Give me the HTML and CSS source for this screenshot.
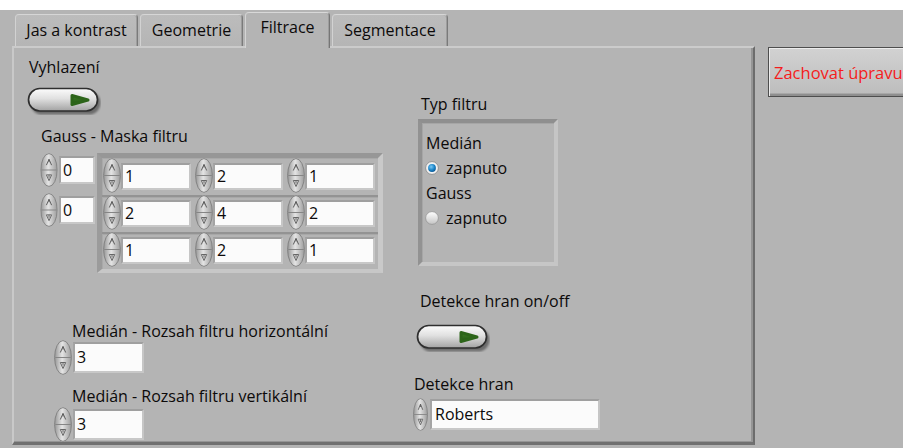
FILE: index.html
```html
<!DOCTYPE html>
<html lang="cs">
<head>
<meta charset="utf-8">
<title>Filtrace</title>
<link rel="stylesheet" href="styles.css">
</head>
<body>
<svg class="defs" width="0" height="0" aria-hidden="true">
  <defs>
    <linearGradient id="spinFill" x1="0" x2="1" y1="0" y2="0">
      <stop offset="0" stop-color="#979797"/>
      <stop offset="0.45" stop-color="#e4e4e4"/>
      <stop offset="1" stop-color="#9c9c9c"/>
    </linearGradient>
    <linearGradient id="capFill" x1="0" x2="0" y1="0" y2="1">
      <stop offset="0" stop-color="#fcfcfc"/>
      <stop offset="0.45" stop-color="#e0e0e0"/>
      <stop offset="1" stop-color="#a2a2a2"/>
    </linearGradient>
    <linearGradient id="arrowFill" x1="0" x2="0" y1="0" y2="1">
      <stop offset="0" stop-color="#3d7f26"/>
      <stop offset="1" stop-color="#245514"/>
    </linearGradient>
    <radialGradient id="dotFill" cx="0.4" cy="0.35" r="0.7">
      <stop offset="0" stop-color="#7cc8f2"/>
      <stop offset="0.6" stop-color="#1a84c8"/>
      <stop offset="1" stop-color="#0c5590"/>
    </radialGradient>
    <linearGradient id="radioFill" x1="0" x2="0" y1="0" y2="1">
      <stop offset="0" stop-color="#ffffff"/>
      <stop offset="1" stop-color="#c4c4c4"/>
    </linearGradient>
    <filter id="soft" x="-20%" y="-40%" width="140%" height="180%">
      <feGaussianBlur stdDeviation="1.3"/>
    </filter>
    <!-- increment / decrement buttons of a numeric -->
    <symbol id="spin" viewBox="0 0 18 35">
      <ellipse cx="9" cy="17.5" rx="8.4" ry="16.9" fill="url(#spinFill)" stroke="#7e7e7e" stroke-width="0.9"/>
      <path d="M1.2 17.5 H16.8" stroke="#858585" stroke-width="1"/>
      <path d="M6.3 12.5 L9 6.5 L11.7 12.5 M9 6.5 V9.5" fill="none" stroke="#5a5a5a" stroke-width="1"/>
      <path d="M6.3 22.5 H11.7 L9 28.5 Z M9 22.5 V25.5" fill="none" stroke="#666666" stroke-width="1"/>
    </symbol>
    <!-- boolean switch with green arrow -->
    <symbol id="switch" viewBox="0 0 74 28">
      <rect x="3.5" y="4.5" width="70" height="23" rx="11.5" fill="#000" opacity="0.4" filter="url(#soft)"/>
      <rect x="1.5" y="1.5" width="69" height="22.5" rx="11.25" fill="url(#capFill)" stroke="#2e2e2e" stroke-width="1.7"/>
      <path d="M45 8.5 L61 13 L45 17.5 Z" fill="url(#arrowFill)" stroke="#2c6419" stroke-width="3" stroke-linejoin="round"/>
    </symbol>
    <symbol id="radio-on" viewBox="0 0 14 14">
      <circle cx="7" cy="7" r="6.4" fill="#f2f2f2" stroke="#8c8c8c" stroke-width="0.9"/>
      <circle cx="7" cy="7" r="3.9" fill="url(#dotFill)"/>
    </symbol>
    <symbol id="radio-off" viewBox="0 0 14 14">
      <circle cx="7" cy="7" r="6.4" fill="url(#radioFill)" stroke="#9a9a9a" stroke-width="0.9"/>
    </symbol>
  </defs>
</svg>

<div class="window">
  <div class="tabctl">
    <div class="tabs">
      <div class="tab tab-jas">Jas a kontrast</div>
      <div class="tab tab-geo">Geometrie</div>
      <div class="tab tab-filt active">Filtrace</div>
      <div class="tab tab-seg">Segmentace</div>
    </div>

    <div class="panel">
      <div class="col col-left">
        <div class="lbl lbl-vyhl">Vyhlazení</div>
        <svg class="switch switch-vyhl" viewBox="0 0 74 28"><use href="#switch"/></svg>

        <div class="lbl lbl-gauss">Gauss - Maska filtru</div>
        <div class="array">
          <div class="indices">
            <div class="num idx">
              <svg class="spin" viewBox="0 0 18 35"><use href="#spin"/></svg>
              <div class="field field-idx">0</div>
            </div>
            <div class="num idx">
              <svg class="spin" viewBox="0 0 18 35"><use href="#spin"/></svg>
              <div class="field field-idx">0</div>
            </div>
          </div>
          <div class="arr-frame">
            <div class="arr-row">
              <div class="num cell"><svg class="spin" viewBox="0 0 18 35"><use href="#spin"/></svg><div class="field field-cell">1</div></div>
              <div class="num cell"><svg class="spin" viewBox="0 0 18 35"><use href="#spin"/></svg><div class="field field-cell">2</div></div>
              <div class="num cell"><svg class="spin" viewBox="0 0 18 35"><use href="#spin"/></svg><div class="field field-cell">1</div></div>
            </div>
            <div class="arr-row">
              <div class="num cell"><svg class="spin" viewBox="0 0 18 35"><use href="#spin"/></svg><div class="field field-cell">2</div></div>
              <div class="num cell"><svg class="spin" viewBox="0 0 18 35"><use href="#spin"/></svg><div class="field field-cell">4</div></div>
              <div class="num cell"><svg class="spin" viewBox="0 0 18 35"><use href="#spin"/></svg><div class="field field-cell">2</div></div>
            </div>
            <div class="arr-row">
              <div class="num cell"><svg class="spin" viewBox="0 0 18 35"><use href="#spin"/></svg><div class="field field-cell">1</div></div>
              <div class="num cell"><svg class="spin" viewBox="0 0 18 35"><use href="#spin"/></svg><div class="field field-cell">2</div></div>
              <div class="num cell"><svg class="spin" viewBox="0 0 18 35"><use href="#spin"/></svg><div class="field field-cell">1</div></div>
            </div>
          </div>
        </div>

        <div class="lbl lbl-horiz">Medián - Rozsah filtru horizontální</div>
        <div class="num range range-h">
          <svg class="spin" viewBox="0 0 18 35"><use href="#spin"/></svg>
          <div class="field field-range">3</div>
        </div>
        <div class="lbl lbl-vert">Medián - Rozsah filtru vertikální</div>
        <div class="num range range-v">
          <svg class="spin" viewBox="0 0 18 35"><use href="#spin"/></svg>
          <div class="field field-range">3</div>
        </div>
      </div>

      <div class="col col-right">
        <div class="lbl lbl-typ">Typ filtru</div>
        <div class="typ-frame">
          <div class="lbl typ-head">Medián</div>
          <div class="radio-row">
            <svg class="radio" viewBox="0 0 14 14"><use href="#radio-on"/></svg>
            <span>zapnuto</span>
          </div>
          <div class="lbl typ-head typ-head-2">Gauss</div>
          <div class="radio-row">
            <svg class="radio" viewBox="0 0 14 14"><use href="#radio-off"/></svg>
            <span>zapnuto</span>
          </div>
        </div>

        <div class="lbl lbl-onoff">Detekce hran on/off</div>
        <svg class="switch switch-edge" viewBox="0 0 74 28"><use href="#switch"/></svg>

        <div class="lbl lbl-edge">Detekce hran</div>
        <div class="num ring">
          <svg class="spin spin-ring" viewBox="0 0 18 35" preserveAspectRatio="none"><use href="#spin"/></svg>
          <div class="field field-ring">Roberts</div>
        </div>
      </div>
    </div>
  </div>

  <div class="side">
    <button class="keep" type="button">Zachovat úpravu</button>
  </div>
</div>
</body>
</html>
```

FILE: styles.css
```css
html, body {
  margin: 0;
  padding: 0;
  width: 903px;
  height: 448px;
  overflow: hidden;
  background: #ffffff;
}

body {
  font-family: "Open Sans", "Noto Sans", sans-serif;
  font-size: 16px;
  color: #0c0a0a;
}

.defs {
  display: block;
  width: 0;
  height: 0;
  overflow: hidden;
}

.window {
  display: flex;
  margin-top: 10px;
  height: 438px;
  background: #b4b4b4;
}

/* ---------- tab control ---------- */
.tabctl {
  flex: none;
  margin-left: 12px;
  width: 743px;
  display: flex;
  flex-direction: column;
}

.tabs {
  height: 36px;
  display: flex;
  align-items: flex-end;
  gap: 2px;
  padding-left: 3px;
}

.tab {
  box-sizing: border-box;
  height: 32px;
  padding: 5px 0 0;
  text-align: center;
  line-height: 20px;
  white-space: nowrap;
  background: linear-gradient(#bcbcbc, #b5b5b5);
  border: 1px solid;
  border-color: #d6d6d6 #7a7a7a transparent #d2d2d2;
  border-bottom: 0;
  border-radius: 4px 4px 0 0;
  box-shadow: inset -1px 0 0 #9d9d9d;
}

.tab-jas  { width: 123px; }
.tab-geo  { width: 103px; }
.tab-filt { width: 85px; }
.tab-seg  { width: 116px; }

.tab.active {
  position: relative;
  z-index: 1;
  height: 36px;
  margin-bottom: -2px;
  padding-top: 4px;
  background: #b4b4b4;
  border-color: #d8d8d8 #767676 transparent #d4d4d4;
}

.panel {
  box-sizing: border-box;
  height: 399px;
  display: flex;
  background: #b4b4b4;
  border-top: 2px solid #cbcbcb;
  border-left: 2px solid #c9c9c9;
  border-right: 2px solid #6c6c6c;
  border-bottom: 3px solid #707070;
  box-shadow: inset -2px -1px 0 #959595;
}

.col {
  display: flex;
  flex-direction: column;
  align-items: flex-start;
}

.col-left  { width: 384px; flex: none; }
.col-right { flex: 1; }

.lbl {
  line-height: 20px;
  white-space: nowrap;
}

/* ---------- left column ---------- */
.lbl-vyhl  { margin: 9px 0 0 15px; }
.switch    { display: block; width: 74px; height: 28px; }
.switch-vyhl { margin: 10px 0 0 13px; }
.lbl-gauss { margin: 11px 0 0 27px; }

.array {
  display: flex;
  align-items: flex-start;
  margin: 7px 0 0 26px;
}

.indices {
  display: flex;
  flex-direction: column;
  gap: 6px;
}

.num {
  display: flex;
  align-items: center;
}

.spin {
  display: block;
  flex: none;
  width: 18px;
  height: 35px;
}

.idx .spin { height: 34px; }

.field {
  box-sizing: border-box;
  background: #fbfbfb;
  border: 2px solid;
  border-color: #9f9f9f #c6c6c6 #c8c8c8 #a4a4a4;
  padding-left: 2px;
  white-space: nowrap;
  color: #0c0a0a;
}

.field-idx {
  margin-left: 1px;
  width: 36px;
  height: 28px;
  line-height: 24px;
}

.arr-frame {
  box-sizing: border-box;
  margin-left: 2px;
  width: 286px;
  height: 120px;
  border-style: solid;
  border-width: 5px 5px 4px 5px;
  border-color: #979797 #c9c9c9 #c7c7c7 #9b9b9b;
  box-shadow: inset 1px 1px 0 #a9a9a9;
}

.arr-row {
  display: flex;
  gap: 4px;
  height: 37px;
  padding-left: 1px;
}

.arr-row + .arr-row {
  box-shadow: inset 0 2px 0 #939393, inset 0 3px 0 #a8a8a8;
}

.cell { align-items: flex-start; }

.field-cell {
  margin-top: 5px;
  width: 70px;
  height: 27px;
  line-height: 23px;
}

.lbl-horiz { margin: 48px 0 0 58px; }
.range-h   { margin: -1px 0 0 40px; }
.lbl-vert  { margin: 11px 0 0 58px; }
.range-v   { margin: 1px 0 0 40px; }

.field-range {
  margin-left: 1px;
  width: 71px;
  height: 31px;
  line-height: 27px;
}

/* ---------- right column ---------- */
.lbl-typ { margin: 46px 0 0 23px; }

.typ-frame {
  box-sizing: border-box;
  margin: 5px 0 0 20px;
  width: 140px;
  height: 147px;
  padding: 10px 0 0 3px;
  border-style: solid;
  border-width: 4px;
  border-color: #8f8f8f #c5c5c5 #c6c6c6 #929292;
  box-shadow: inset 1px 1px 0 #a6a6a6;
}

.typ-head { padding-left: 1px; }
.typ-head-2 { margin-top: 5px; }

.radio-row {
  display: flex;
  align-items: center;
  gap: 7px;
  height: 20px;
  margin-top: 5px;
  line-height: 20px;
}

.radio {
  display: block;
  width: 14px;
  height: 14px;
}

.lbl-onoff   { margin: 25px 0 0 22px; }
.switch-edge { margin: 13px 0 0 18px; }
.lbl-edge    { margin: 22px 0 0 16px; }

.ring { margin: 4px 0 0 15px; }

.spin-ring {
  width: 15px;
  height: 33px;
}

.field-ring {
  margin-left: 2px;
  width: 170px;
  height: 31px;
  line-height: 27px;
  padding-left: 3px;
}

/* ---------- side button ---------- */
.side {
  flex: none;
  margin-left: 13px;
  padding-top: 37px;
}

.keep {
  box-sizing: border-box;
  display: block;
  width: 150px;
  height: 50px;
  padding: 0 0 0 5px;
  margin: 0;
  text-align: left;
  font-family: "Open Sans", "Noto Sans", sans-serif;
  font-size: 16.5px;
  color: #f51c1c;
  background: linear-gradient(#d2d2d2, #c6c6c6 55%, #bcbcbc);
  border: 1px solid #4e4e4e;
  box-shadow: inset 1px 1px 0 #ececec, inset -2px -2px 0 #8f8f8f, inset -3px -3px 0 #a8a8a8;
}
```
